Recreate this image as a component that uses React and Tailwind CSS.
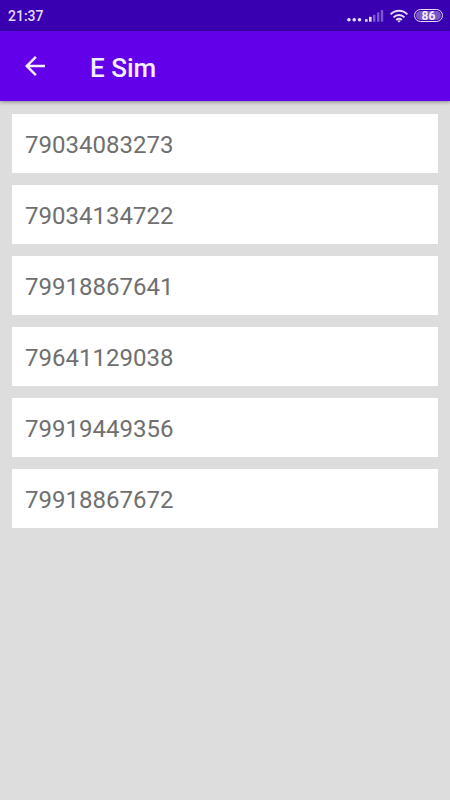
const NUMBERS = [
  '79034083273',
  '79034134722',
  '79918867641',
  '79641129038',
  '79919449356',
  '79918867672',
];

function StatusBar() {
  return (
    <div className="flex h-[31px] items-center justify-between bg-[#3900b1] pl-2 pr-[7px] text-[#e6dcf8]">
      <span className="pt-px text-sm font-medium">21:37</span>
      <div className="flex items-center">
        <svg className="h-4 w-[38px]" viewBox="0 0 38 16" fill="currentColor" aria-hidden="true">
          <circle cx="1.9" cy="11.8" r="1.8" />
          <circle cx="7.2" cy="11.8" r="1.8" />
          <circle cx="12.5" cy="11.8" r="1.8" />
          <rect x="18" y="11.2" width="2.6" height="2.5" />
          <rect x="22" y="8.8" width="2.6" height="4.9" />
          <rect x="26" y="6.8" width="2.4" height="6.9" opacity="0.4" />
          <rect x="30" y="4.4" width="2.4" height="9.3" opacity="0.4" />
          <rect x="33.8" y="2" width="2.4" height="11.7" opacity="0.4" />
        </svg>
        <svg className="ml-1 h-4 w-[20px]" viewBox="0 0 20 16" fill="none" stroke="currentColor" strokeWidth="1.9" aria-hidden="true">
          <path d="M1.6 6.4C6.4 1.6 13.6 1.6 18.4 6.4" />
          <path d="M4.5 9.3C7.6 6.2 12.4 6.2 15.5 9.3" />
          <path d="M7.2 12C8.8 10.4 11.2 10.4 12.8 12" />
          <path d="M8.4 12.9C9.3 12 10.7 12 11.6 12.9L10 14.6Z" fill="currentColor" stroke="none" />
        </svg>
        <span className="ml-[5px] flex h-[13px] w-[29px] rounded-full border border-current p-px">
          <span className="flex flex-1 items-center justify-center rounded-full bg-[#7a54cd] text-xs leading-none font-bold text-[#f5eeff]">
            86
          </span>
        </span>
      </div>
    </div>
  );
}

function AppBar({ title }) {
  return (
    <header className="relative flex h-[70px] items-center bg-[#6200ea] pl-[19px] text-[#f5eeff] shadow-[0_1px_4px_rgba(0,0,0,0.4)]">
      <button type="button" aria-label="Back" className="flex size-8 items-center justify-center">
        <svg className="size-[30px]" viewBox="0 0 24 24" fill="currentColor" aria-hidden="true">
          <path d="M20 11H7.83l5.59-5.59L12 4l-8 8 8 8 1.41-1.41L7.83 13H20v-2z" />
        </svg>
      </button>
      <h1 className="ml-[39px] pt-1 text-[26px] leading-8 font-medium">{title}</h1>
    </header>
  );
}

function App() {
  return (
    <div className="flex min-h-screen flex-col bg-[#dddddd] font-['Roboto',sans-serif]">
      <StatusBar />
      <AppBar title="E Sim" />
      <main className="px-3 py-[13px]">
        <ul className="flex flex-col gap-3">
          {NUMBERS.map((number) => (
            <li key={number} className="bg-white px-[13px] pt-[15px] pb-3 text-2xl text-[#6f6f6f]">
              {number}
            </li>
          ))}
        </ul>
      </main>
    </div>
  );
}

export default App;
